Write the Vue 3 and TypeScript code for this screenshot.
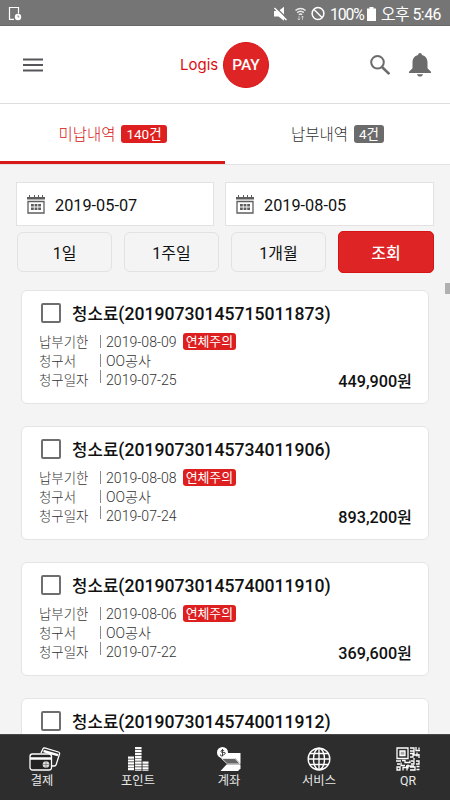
<script setup lang="ts">
import { ref } from 'vue'

interface Bill {
  id: string
  due?: string
  issued?: string
  amount?: string
}

const bills: Bill[] = [
  { id: '20190730145715011873', due: '2019-08-09', issued: '2019-07-25', amount: '449,900원' },
  { id: '20190730145734011906', due: '2019-08-08', issued: '2019-07-24', amount: '893,200원' },
  { id: '20190730145740011910', due: '2019-08-06', issued: '2019-07-22', amount: '369,600원' },
  { id: '20190730145740011912' },
]
const dates = ['2019-05-07', '2019-08-05']
const ranges = ['1일', '1주일', '1개월']
const checked = ref<string[]>([])

function toggle(id: string) {
  checked.value = checked.value.includes(id)
    ? checked.value.filter((c) => c !== id)
    : [...checked.value, id]
}
</script>

<template>
  <div class="app">
    <div class="status">
      <svg width="14" height="16" viewBox="0 0 14 16" fill="none" stroke="#fff" stroke-width="1.2">
        <path d="M6 13.3H1.500V1.500h9v6" />
        <circle cx="10" cy="11" r="3.200" fill="#fff" stroke="none" />
        <path d="M10 9.300V11h1.400" stroke="#777" stroke-width=".8" />
      </svg>
      <svg class="st-icons" width="54" height="16" viewBox="0 0 54 16" fill="none" stroke="#fff">
        <path d="M1 5h4.500L11 .800v14L5.500 10.500H1z" fill="#fff" stroke="none" />
        <path d="M2.500 1l12 12" stroke="#757575" stroke-width="1.500" />
        <path d="M1.500 2l12 12" stroke-width="1.500" />
        <path d="M22.500 4.500q5-4 10 0M24.200 6.700q3.300-2.700 6.600 0M25.800 8.700q1.700-1.300 3.400 0" stroke-width="1.500" opacity=".85" />
        <path d="M26 10v4M29.500 10v4M24.700 12.500l1.300 1.500 1.200-1.500M28.300 11.500l1.200-1.500 1.200 1.500" stroke-width="1" opacity=".5" />
        <circle cx="45" cy="7.500" r="5.900" stroke-width="1.500" />
        <path d="M41 3.500l8 8" stroke-width="1.500" />
      </svg>
      <span class="st-pct">100%</span>
      <svg width="9" height="14" viewBox="0 0 9 14"><path d="M0 1.500h2.500V0h4v1.500H9V14H0z" fill="#fff" /></svg>
      <span class="st-time">오후 5:46</span>
    </div>

    <header class="header">
      <svg width="20" height="14" viewBox="0 0 20 14" stroke="#56565a" stroke-width="2"><path d="M0 1.500h20M0 7h20M0 12.500h20" /></svg>
      <div class="logo"><span class="logis">Logis</span><span class="pay">PAY</span></div>
      <div class="actions">
        <svg width="20" height="20" viewBox="0 0 20 20" fill="none" stroke="#6b6b6b"><circle cx="7.500" cy="7.300" r="6.300" stroke-width="2" /><path d="M12 12l7.300 7" stroke-width="2.500" /></svg>
        <svg width="22" height="24" viewBox="0 0 22 24" fill="#6b6b6b"><path d="M11 0c1.200 0 1.800.8 1.900 2 3.800.9 5.600 4 5.600 7.500v5.700L22 18.700V20H0v-1.300l3.500-3.500V9.500C3.500 6 5.300 2.900 9.100 2 9.200.8 9.800 0 11 0zM8 21.200h6c-.4 1.600-1.500 2.300-3 2.300s-2.600-.7-3-2.300z" /></svg>
      </div>
    </header>

    <nav class="tabs">
      <div class="tab active"><span>미납내역</span><b class="badge">140건</b></div>
      <div class="tab"><span>납부내역</span><b class="badge">4건</b></div>
    </nav>

    <main class="content">
      <div class="dates">
        <div v-for="d in dates" :key="d" class="date">
          <svg width="18" height="20" viewBox="0 0 18 20" fill="none" stroke="#5e5e5e">
            <path d="M1 7.500h16v11.500H1z" stroke-width="1.300" />
            <path d="M0 3h2v-2h1v2h4v-2h1v2h3v-2h1v2h3v-2h1v2h2V5.500H0z" fill="#5e5e5e" stroke="none" />
            <path d="M4 11.300h2.800M7.600 11.300h2.800M11.200 11.300H14M4 14.700h2.800M7.600 14.700h2.800M11.200 14.700H14" stroke-width="2.500" />
          </svg>
          <span>{{ d }}</span>
        </div>
      </div>
      <div class="ranges">
        <button v-for="r in ranges" :key="r" class="range">{{ r }}</button>
        <button class="search">조회</button>
      </div>

      <section class="bills">
        <article v-for="b in bills" :key="b.id" class="bill">
          <div class="title">
            <span class="check" :class="{ on: checked.includes(b.id) }" @click="toggle(b.id)"></span>
            <h2>청소료<span class="num">({{ b.id }})</span></h2>
          </div>
          <dl v-if="b.due">
            <div class="row"><dt>납부기한</dt><i></i><dd>{{ b.due }}</dd><em>연체주의</em></div>
            <div class="row"><dt>청구서</dt><i></i><dd>OO공사</dd></div>
            <div class="row last"><dt>청구일자</dt><i></i><dd>{{ b.issued }}</dd></div>
          </dl>
          <strong v-if="b.amount" class="amount">{{ b.amount }}</strong>
        </article>
      </section>
      <span class="thumb"></span>
    </main>

    <footer class="bottom">
      <div class="item pay-item">
        <svg width="32" height="24" viewBox="0 0 32 24" fill="none" stroke="#fff" stroke-width="1.300">
          <path d="M12 6l2-4.300q.5-1 1.700-.7l13.700 4q1.500.5 1.100 2l-3.300 10.500q-.5 1.600-2.200 1.500H23" />
          <path d="M14.500 4L29 8.200" stroke-width="2.400" />
          <rect x="1" y="7" width="21.500" height="16" rx="2.500" fill="#222" />
          <path d="M1 11.500h21.500" stroke-width="2.500" />
          <circle cx="17" cy="17.500" r="3.300" fill="#ddd" stroke="none" />
          <path d="M13.500 17.500h7M17 14v7" stroke="#666" stroke-width=".6" />
        </svg>
        <span>결제</span>
      </div>
      <div class="item">
        <svg width="24" height="24" viewBox="0 0 24 24" fill="none" stroke="#fff">
          <path d="M5 9.500V24" stroke-width="6" stroke-dasharray="2.200 .7" />
          <path d="M12.300 0v24" stroke-width="6.500" stroke-dasharray="2.200 .7" />
          <path d="M19.500 14.500V24" stroke-width="6" stroke-dasharray="2.200 .7" />
        </svg>
        <span>포인트</span>
      </div>
      <div class="item">
        <svg width="24" height="24" viewBox="0 0 24 24">
          <path d="M7 6h16.500v11L18.500 11.500H5z" fill="#fff" />
          <path d="M4.500 11.500H18l5 5.500H10.500z" fill="#666" stroke="#fff" stroke-width=".8" />
          <path d="M9.500 17.500h14v4L21 24H3.500z" fill="#fff" />
          <circle cx="5.500" cy="5.500" r="5.500" fill="#fff" />
          <path d="M7.200 3.800q-3-1.300-3.300.3t3 1.500-.3 2.300-3-.5M5.500 2v7.300" fill="none" stroke="#333" stroke-width=".9" />
        </svg>
        <span>계좌</span>
      </div>
      <div class="item">
        <svg width="24" height="24" viewBox="0 0 24 24" fill="none" stroke="#fff" stroke-width="1.400">
          <circle cx="12" cy="12" r="10.800" /><ellipse cx="12" cy="12" rx="5.500" ry="10.800" />
          <path d="M12 1v22M1 12h22M3 6.500h18M3 17.500h18" />
        </svg>
        <span>서비스</span>
      </div>
      <div class="item">
        <svg width="24" height="24" viewBox="0 0 24 24" fill="none" stroke="#fff" stroke-width="1.300">
          <path d="M1 1h11v10.500H1z" />
          <path d="M4 4h5v4.500H4z" fill="#aaa" />
          <path d="M14 1h4v3h-4M20 0v3.500h4M23 .500v2M14 6.500h4v-2M21 5.500v4M14 10h3v-2h6M23 7v4M18 11v2" />
          <path d="M0 14h5M6 13.500h3v2h5v-2M1 17h3M5 15.500v3h4M1 20h3v3H1zM7 23.500v-3h4v3M12 17.500v4M15 14h3v3h-3M20 14h3v3h-3M14 20h5v3h-5M20.500 19.500h3M20.500 22.500h3M10 19h8" />
        </svg>
        <span>QR</span>
      </div>
    </footer>
  </div>
</template>

<style>
body {
  margin: 0;
  overflow: hidden;
}
</style>

<style scoped>
* {
  box-sizing: border-box;
}
.app {
  width: 450px;
  height: 800px;
  display: flex;
  flex-direction: column;
  overflow: hidden;
  background: #f4f4f4;
  color: #111;
  font-family: Roboto, 'Noto Sans CJK KR', sans-serif;
}
.status {
  height: 26px;
  flex: none;
  display: flex;
  align-items: center;
  background: #757575;
  border-bottom: 1px solid #686868;
  color: #fff;
  padding: 2px 8px 0 8px;
  white-space: nowrap;
}
.st-icons {
  margin-left: auto;
}
.st-pct {
  width: 34px;
  margin: 0 3px 0 3px;
  padding-top: 2px;
  font-size: 15.800px;
  line-height: 22px;
  letter-spacing: -1.100px;
}
.st-time {
  width: 61px;
  margin-left: 5px;
  padding-top: 2px;
  font-size: 15.800px;
  line-height: 22px;
  letter-spacing: -0.500px;
}
.header {
  height: 78px;
  flex: none;
  display: grid;
  grid-template-columns: 1fr auto 1fr;
  align-items: center;
  padding: 0 19px 0 23px;
  background: #fff;
  border-bottom: 1px solid #ddd;
}
.logo {
  display: flex;
  align-items: center;
  gap: 6px;
  margin-right: 5px;
}
.logis {
  width: 37px;
  color: #d90f12;
  font: 400 15px/20px Inter, sans-serif;
  white-space: nowrap;
}
.pay {
  width: 46px;
  height: 46px;
  border-radius: 50%;
  background: #de2424;
  border: 1px solid #d81313;
  color: #fff;
  font-size: 15.500px;
  font-weight: 500;
  line-height: 45px;
  text-align: center;
}
.actions {
  display: flex;
  justify-content: flex-end;
  align-items: center;
  gap: 19px;
}
.tabs {
  height: 61px;
  flex: none;
  display: flex;
  background: #fff;
  border-bottom: 1px solid #e3e3e3;
}
.tab {
  flex: 1;
  display: flex;
  align-items: center;
  justify-content: center;
  gap: 6px;
  padding-top: 1px;
  font-size: 15.500px;
  font-weight: 300;
  color: #333;
  border-bottom: 1px solid transparent;
  line-height: 22px;
}
.tab span {
  padding-top: 1px;
}
.tab.active {
  padding-top: 3px;
  color: #d81313;
  border-bottom: 3px solid #d91818;
}
.badge {
  height: 18px;
  padding: 0 5px;
  border-radius: 3px;
  background: #6b6b6b;
  color: #fff;
  font-size: 13.500px;
  font-weight: 400;
  line-height: 19px;
}
.active .badge {
  background: #de1f1f;
}
.content {
  position: relative;
  flex: 1;
  min-height: 0;
  overflow: hidden;
  padding: 17px 16px 0;
}
.dates {
  display: grid;
  grid-template-columns: 198px 209px;
  gap: 11px;
}
.date {
  height: 44px;
  display: flex;
  align-items: center;
  gap: 10px;
  padding-left: 10px;
  background: #fff;
  border: 1px solid #e2e2e2;
  font-size: 16.300px;
}
.date span {
  padding-top: 2px;
}
.ranges {
  display: grid;
  grid-template-columns: 95px 95px 95px 96px;
  gap: 12px;
  margin: 5px 0 0 1px;
  align-items: center;
}
button {
  padding: 3px 0 0;
  font-family: inherit;
  font-size: 16px;
  line-height: 22px;
  color: #111;
}
.range {
  height: 40px;
  background: #f4f4f4;
  border: 1px solid #e2e2e2;
  border-radius: 6px;
}
.search {
  height: 42px;
  background: #de2424;
  border: 1px solid #d81313;
  border-radius: 5px;
  color: #fff;
  font-weight: 500;
}
.bills {
  display: flex;
  flex-direction: column;
  gap: 22px;
  margin: 17px 5px 0;
}
.bill {
  position: relative;
  height: 114px;
  flex: none;
  width: 408px;
  padding: 12px 16px 0 17px;
  background: #fff;
  border: 1px solid #e4e4e4;
  border-radius: 6px;
}
.title {
  display: flex;
  align-items: center;
  gap: 11px;
  height: 20px;
  padding-left: 2px;
}
.check {
  width: 20px;
  height: 20px;
  border: 2px solid #6e6e6e;
  border-radius: 2px;
}
.check.on {
  background: #de2424;
}
h2 {
  margin: 0;
  padding-top: 2px;
  font-size: 16.800px;
  font-weight: 500;
  line-height: 20px;
  white-space: nowrap;
}
.num {
  font-size: 17.600px;
}
dl {
  margin: 9px 0 0;
}
.row {
  display: flex;
  align-items: center;
  height: 19px;
  color: #333;
  font-size: 13.400px;
  font-weight: 300;
  line-height: 19px;
  white-space: nowrap;
}
dt {
  width: 61px;
}
dt,
dd {
  padding-top: 1px;
}
.row i {
  width: 1px;
  height: 13px;
  background: #8a8a8a;
  margin-right: 5px;
}
.row.last i {
  margin-bottom: 6px;
}
dd {
  margin: 0;
  font-size: 14.100px;
}
em {
  height: 17px;
  margin-left: 6px;
  padding: 0 3px;
  border-radius: 3px;
  background: #de1f1f;
  color: #fff;
  font-style: normal;
  font-weight: 400;
  font-size: 12.900px;
  line-height: 17px;
}
.amount {
  position: absolute;
  right: 16px;
  bottom: 11px;
  font-size: 16.200px;
  font-weight: 500;
  line-height: 20px;
}
.thumb {
  position: absolute;
  right: 0;
  top: 118px;
  width: 5px;
  height: 11px;
  background: #b0b0b0;
}
.bottom {
  height: 66px;
  flex: none;
  display: grid;
  grid-template-columns: 90px 96px 86px 94px 84px;
  padding: 12px 0 0;
  background: #2d2d2d;
  border-top: 1px solid #484848;
}
.item {
  display: flex;
  flex-direction: column;
  align-items: center;
  gap: 1px;
  color: #e8e8e8;
  font-size: 12.300px;
  line-height: 18px;
}
.pay-item span {
  margin-right: 6px;
}
</style>
